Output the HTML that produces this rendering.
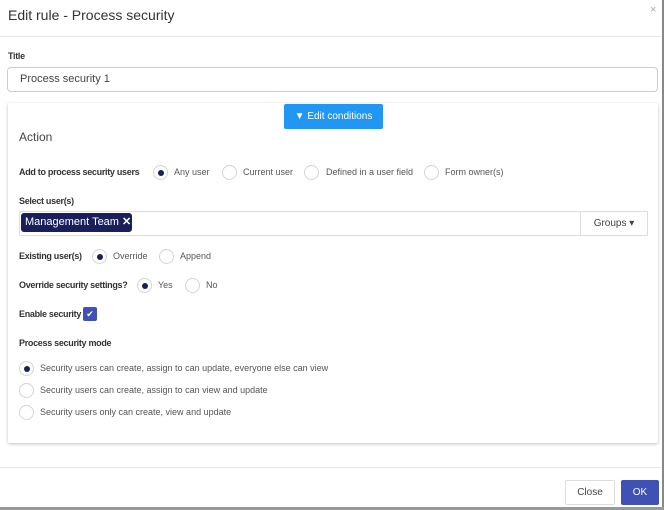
<!DOCTYPE html>
<html><head><style>
*{box-sizing:border-box;margin:0;padding:0}
body{width:664px;height:510px;background:#fff;font-family:"Liberation Sans",sans-serif;position:relative;overflow:hidden;color:#333}
.a{position:absolute;white-space:nowrap}
.lbl{font-size:9px;font-weight:bold;color:#333;letter-spacing:-0.3px}
.t{font-size:9px;color:#555}
.r{position:absolute;width:15px;height:15px;border:1px solid #d4d4d4;border-radius:50%;background:#fff}
.r.on::after{content:"";position:absolute;left:3.5px;top:3.5px;width:6px;height:6px;border-radius:50%;background:#1a1f5c}
</style></head><body>
<div class="a" style="left:8px;top:7px;font-size:14px;color:#333">Edit rule - Process security</div>
<div class="a" style="left:650px;top:4px;font-size:11px;color:#aaa">×</div>
<div class="a" style="left:0;top:36px;width:662px;height:1px;background:#e8e8e8"></div>
<div class="a" style="right:0;top:0;width:2px;height:510px;background:#888"></div>
<div class="a lbl" style="left:8px;top:51px">Title</div>
<div class="a" style="left:7px;top:67px;width:651px;height:25px;border:1px solid #ccc;border-radius:4px;font-size:11px;color:#444;padding:5px 12px">Process security 1</div>
<div class="a" style="left:8px;top:103px;width:650px;height:340px;background:#fff;box-shadow:0 1px 3px rgba(0,0,0,.25);border-radius:2px"></div>
<div class="a" style="left:284px;top:104px;width:99px;height:25px;background:#2196f3;border-radius:2px;color:#fff;font-size:10px;text-align:center;line-height:25px">▼ Edit conditions</div>
<div class="a" style="left:19px;top:130px;font-size:12px;color:#444">Action</div>
<div class="a lbl" style="left:19px;top:167px">Add to process security users</div>
<div class="r on" style="left:153px;top:165px"></div><div class="a t" style="left:174px;top:167px">Any user</div>
<div class="r" style="left:222px;top:165px"></div><div class="a t" style="left:243px;top:167px">Current user</div>
<div class="r" style="left:304px;top:165px"></div><div class="a t" style="left:326px;top:167px">Defined in a user field</div>
<div class="r" style="left:424px;top:165px"></div><div class="a t" style="left:445px;top:167px">Form owner(s)</div>
<div class="a lbl" style="left:19px;top:196px">Select user(s)</div>
<div class="a" style="left:19px;top:211px;width:562px;height:25px;border:1px solid #ddd;border-radius:2px"></div>
<div class="a" style="left:580px;top:211px;width:68px;height:25px;border:1px solid #ddd;font-size:10px;color:#444;text-align:center;line-height:24px">Groups ▾</div>
<div class="a" style="left:21px;top:213px;width:111px;height:19px;background:#1a1f5c;border-radius:3px;color:#fff;font-size:11px;line-height:19px;padding-left:4px">Management Team <b>✕</b></div>
<div class="a lbl" style="left:19px;top:251px">Existing user(s)</div>
<div class="r on" style="left:92px;top:249px"></div><div class="a t" style="left:113px;top:251px">Override</div>
<div class="r" style="left:159px;top:249px"></div><div class="a t" style="left:180px;top:251px">Append</div>
<div class="a lbl" style="left:19px;top:280px">Override security settings?</div>
<div class="r on" style="left:137px;top:278px"></div><div class="a t" style="left:158px;top:280px">Yes</div>
<div class="r" style="left:185px;top:278px"></div><div class="a t" style="left:206px;top:280px">No</div>
<div class="a lbl" style="left:19px;top:309px">Enable security</div>
<div class="a" style="left:83px;top:307px;width:14px;height:14px;background:#3f51b5;border-radius:2px;color:#fff;font-size:9px;text-align:center;line-height:14px">✔</div>
<div class="a lbl" style="left:19px;top:338px">Process security mode</div>
<div class="r on" style="left:19px;top:361px"></div><div class="a t" style="left:40px;top:363px">Security users can create, assign to can update, everyone else can view</div>
<div class="r" style="left:19px;top:383px"></div><div class="a t" style="left:40px;top:385px">Security users can create, assign to can view and update</div>
<div class="r" style="left:19px;top:405px"></div><div class="a t" style="left:40px;top:407px">Security users only can create, view and update</div>
<div class="a" style="left:0;top:467px;width:662px;height:1px;background:#e8e8e8"></div>
<div class="a" style="left:565px;top:480px;width:50px;height:25px;border:1px solid #ddd;border-radius:2px;font-size:10px;color:#444;text-align:center;line-height:23px">Close</div>
<div class="a" style="left:621px;top:480px;width:38px;height:25px;background:#3f51b5;border-radius:2px;font-size:10px;color:#fff;text-align:center;line-height:25px">OK</div>
<div class="a" style="left:0;top:507px;width:664px;height:3px;background:#999"></div>
</body></html>
